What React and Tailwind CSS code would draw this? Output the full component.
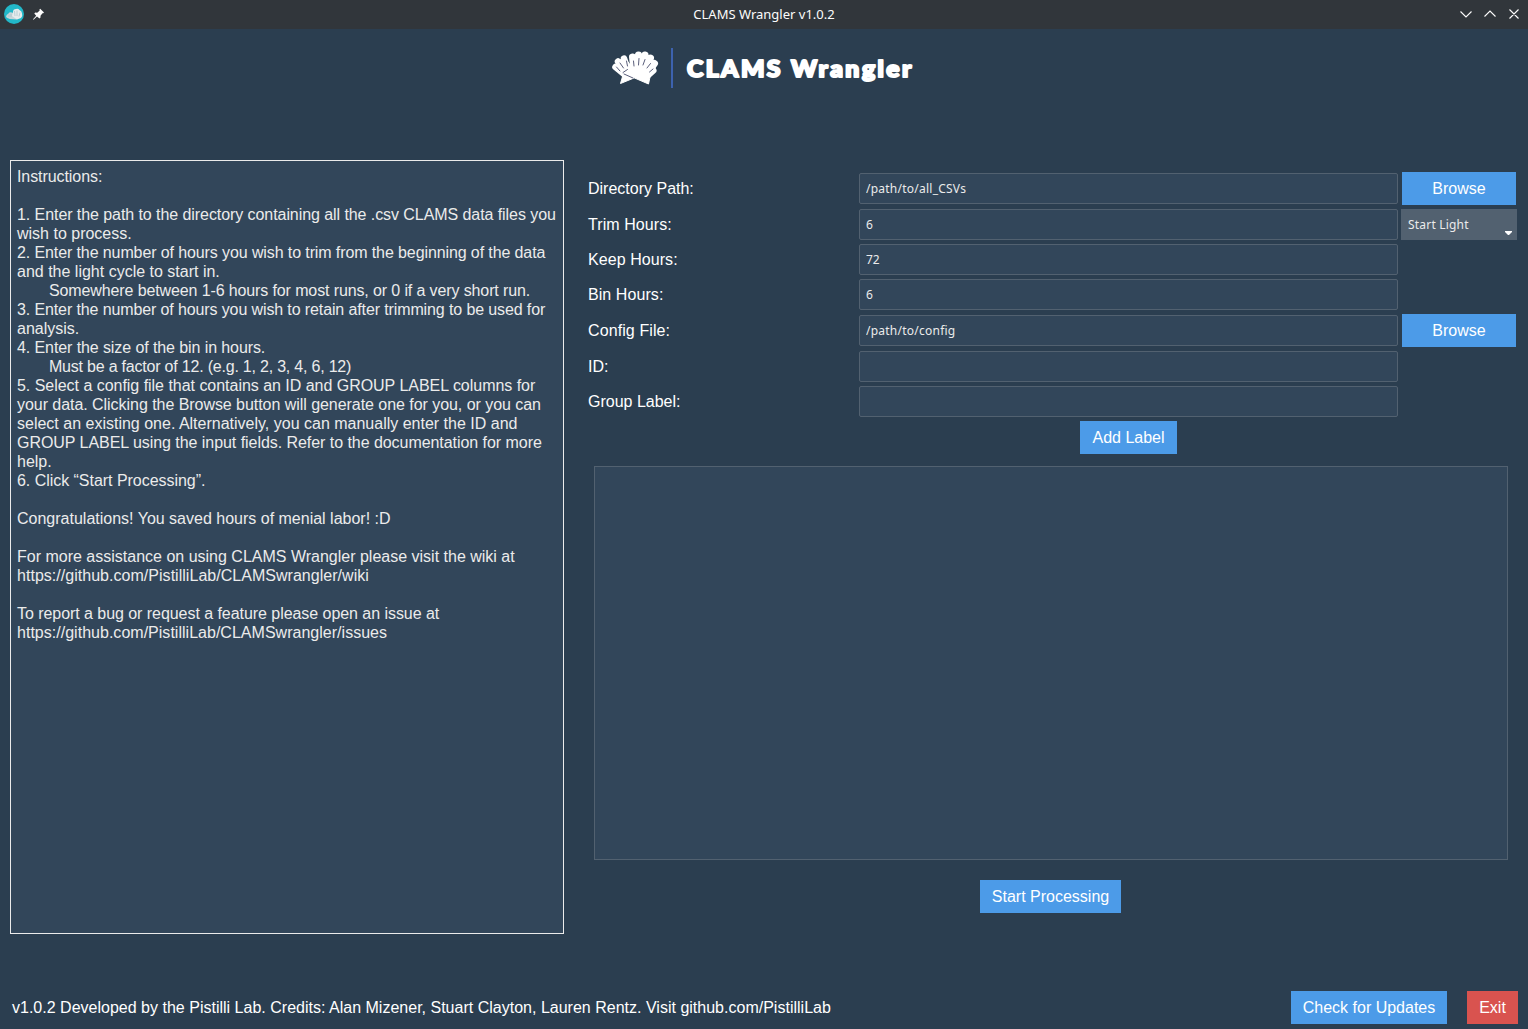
import React from "react";

// Each entry: text, and the total width adjustment in px spread over its letters.
const instructions = [
  ["Instructions:", -1],
  [""],
  ["1. Enter the path to the directory containing all the .csv CLAMS data files you", -5.5],
  ["wish to process.", 0],
  ["2. Enter the number of hours you wish to trim from the beginning of the data", -8],
  ["and the light cycle to start in.", 0],
  ["\tSomewhere between 1-6 hours for most runs, or 0 if a very short run.", -8],
  ["3. Enter the number of hours you wish to retain after trimming to be used for", -9],
  ["analysis.", 0],
  ["4. Enter the size of the bin in hours.", -3.5],
  ["\tMust be a factor of 12. (e.g. 1, 2, 3, 4, 6, 12)", -10],
  ["5. Select a config file that contains an ID and GROUP LABEL columns for", -2],
  ["your data. Clicking the Browse button will generate one for you, or you can", -3.5],
  ["select an existing one. Alternatively, you can manually enter the ID and", 0],
  ["GROUP LABEL using the input fields. Refer to the documentation for more", -3.5],
  ["help.", 0],
  ["6. Click “Start Processing”.", -1],
  [""],
  ["Congratulations! You saved hours of menial labor! :D", 0],
  [""],
  ["For more assistance on using CLAMS Wrangler please visit the wiki at", 0],
  ["https://github.com/PistilliLab/CLAMSwrangler/wiki", 1.5],
  [""],
  ["To report a bug or request a feature please open an issue at", -3],
  ["https://github.com/PistilliLab/CLAMSwrangler/issues", 1],
];

const fields = [
  { label: "Directory Path:", value: "/path/to/all_CSVs", action: "browse" },
  { label: "Trim Hours:", value: "6", action: "select", tracking: "tracking-[0.07px]" },
  { label: "Keep Hours:", value: "72", tracking: "tracking-[0.07px]" },
  { label: "Bin Hours:", value: "6", tracking: "tracking-[0.07px]" },
  { label: "Config File:", value: "/path/to/config", action: "browse", tracking: "tracking-[0.1px]" },
  { label: "ID:", value: "" },
  { label: "Group Label:", value: "" },
];

function Button({ children, className = "" }) {
  return (
    <button
      className={`flex h-[33px] shrink-0 items-center justify-center whitespace-nowrap text-[16px] text-white ${className}`}
    >
      {children}
    </button>
  );
}

function TitleBar() {
  return (
    <header className="grid h-[29px] shrink-0 grid-cols-[1fr_auto_1fr] items-center bg-[#31363b] text-[#fcfcfc]">
      <div className="flex items-center gap-2 pb-px pl-1">
        <svg width="20" height="20" viewBox="0 0 20 20">
          <circle cx="10" cy="10" r="10" fill="#22b8c9" />
          <path d="M2 13Q2 10.500 4.500 9.500Q5.500 7.500 8 8.500L10 10L13 15.500Q4 15.500 2 13Z" fill="#c5d6da" />
          <path d="M8 12L9 8Q9 5 12 5Q14 4 15.500 6Q18 7 18 9.500Q19 12 17 14L13 15.500Z" fill="#e6eced" />
          <path d="M5 13L5 10.500M7 13L7 10M11 12L10.500 7M13 12L13 6.500M15 12.500L16 8.500" stroke="#9dbcc4" strokeWidth=".6" />
        </svg>
        <svg width="13" height="13" viewBox="0 0 13 13" fill="#fcfcfc">
          <path d="M8.200 .800L12 4.500L11.200 5.300L10.500 5.200L8.500 7.700L8.500 9.500L7.500 10.500L5 8.500L1.500 11.800L1 11.300L4.200 7.800L2.300 5.500L3.200 4.500L5.200 4.700L7.700 2.500L7.400 1.600Z" />
        </svg>
      </div>
      <div className="font-['Noto_Sans',sans-serif] text-[13px]">CLAMS Wrangler v1.0.2</div>
      <svg className="mb-px justify-self-end" width="72" height="20" viewBox="0 0 72 20" fill="none" stroke="#fcfcfc" strokeWidth="1.1">
        <path d="M4.500 7.500L10 13L15.500 7.500M28.500 12.500L34 7L39.500 12.500M53.500 5.500L62.500 14.500M62.500 5.500L53.500 14.500" />
      </svg>
    </header>
  );
}

function Logo() {
  return (
    <svg className="ml-[610px] block" width="304" height="44" viewBox="610 46 304 44" role="img">
      <g fill="#fff" stroke="#fff" strokeLinecap="round" strokeLinejoin="round">
        <path d="M615 68L623 75L620.500 83.500L634 78L629 63L624 58L618 61Z" strokeWidth="1" />
        <path d="M615.500 67L624 74M618 61.500L625 71M624 58.500L628 70" strokeWidth="6.500" />
        <path d="M623 73L648.500 84L650 77L655 71L655 62L650 57L644 54L632 56L630 69Z" strokeWidth="1" />
        <path d="M632.500 57L634 71M638.500 55L639 71M645 55L643 71M650.500 58L646 71M654.500 63.500L647 74M653 70.500L648 75" strokeWidth="7" />
      </g>
      <path
        d="M616.500 67L620 71M620 63L623.500 68M626.500 61L627.500 66M633.500 61L634 66M639 58.500L638.500 65M645 59.500L643 65M650.500 63.500L647 68M653 69L649.500 72M623 72.500L627.500 69.500M624 74L633 78"
        fill="none"
        stroke="#5b5f7c"
        strokeWidth="1"
        strokeLinecap="round"
      />
      <rect x="671" y="48" width="2" height="40" fill="#3d62ae" />
      <g
        fill="#fff"
        stroke="#fff"
        strokeWidth="2"
        strokeLinejoin="round"
        fontFamily="Lato, sans-serif"
        fontWeight="900"
        fontSize="22.500"
      >
        <g transform="translate(687 77) scale(1.1 1)">
          <text textLength="85" lengthAdjust="spacing">CLAMS</text>
        </g>
        <g transform="translate(791 77) scale(1.1 1)">
          <text textLength="109.500" lengthAdjust="spacing">Wrangler</text>
        </g>
      </g>
    </svg>
  );
}

function Field({ label, value, action, tracking = "" }) {
  return (
    <div className={`flex items-center ${action === "browse" ? "h-[37px]" : "h-[35px]"}`}>
      <label className={`w-[271px] text-[16px] leading-[19px] text-white ${tracking}`}>{label}</label>
      <input
        aria-label={label}
        defaultValue={value}
        className={`h-[31px] w-[539px] rounded-[2px] border border-[#526170] bg-[#32465a] px-[6px] font-['Noto_Sans',sans-serif] text-[12px] text-[#ebebeb] outline-none ${
          action === "browse" ? "tracking-[0.24px]" : ""
        }`}
      />
      {action === "browse" && <Button className="ml-1 w-[114px] bg-[#4c9be8]">Browse</Button>}
      {action === "select" && (
        <button className="ml-[3px] flex h-[31px] w-[116px] items-center justify-between bg-[#526170] pl-[7px] pr-[5px] font-['Noto_Sans',sans-serif] text-[12px] tracking-[0.2px] text-[#ebebeb]">
          Start Light
          <svg className="mt-[17px]" width="7" height="4" viewBox="0 0 7 4" fill="#fff">
            <path d="M0 0H7V1L4 4H3L0 1Z" />
          </svg>
        </button>
      )}
    </div>
  );
}

export default function App() {
  return (
    <div className="flex h-[1029px] w-[1528px] flex-col overflow-hidden bg-[#2b3e50] font-['Liberation_Sans',sans-serif]">
      <TitleBar />
      <div className="h-[131px] shrink-0 pt-[17px]">
        <Logo />
      </div>
      <main className="flex h-[774px] shrink-0 pl-[10px]">
        <section className="w-[554px] shrink-0 border border-[#ebebeb] bg-[#32465a] px-[6px] pt-[6px] text-[16px] leading-[19px] text-[#ebebeb]">
          {instructions.map(([line, adjust = 0], i) => (
            <p
              key={i}
              className={`h-[19px] whitespace-nowrap ${line.startsWith("\t") ? "pl-8" : ""}`}
              style={adjust ? { letterSpacing: `${adjust / line.trim().length}px` } : undefined}
            >
              {line.trim()}
            </p>
          ))}
        </section>
        <section className="ml-6 flex w-[930px] flex-col pt-[10px]">
          {fields.map((f) => (
            <Field key={f.label} {...f} />
          ))}
          <div className="flex h-[37px] items-center pl-[492px]">
            <Button className="w-[97px] bg-[#4c9be8]">Add Label</Button>
          </div>
          <div className="ml-[6px] mt-[10px] h-[394px] w-[914px] shrink-0 border border-[#526170] bg-[#32465a]" />
          <Button className="ml-[392px] mt-5 w-[141px] bg-[#4c9be8]">Start Processing</Button>
        </section>
      </main>
      <footer className="mt-[57px] flex h-[33px] items-center pl-3 pr-[10px]">
        <p className="flex-1 text-[16px] tracking-[0.008px] text-white">
          v1.0.2 Developed by the Pistilli Lab. Credits: Alan Mizener, Stuart Clayton, Lauren Rentz. Visit github.com/PistilliLab
        </p>
        <Button className="w-[156px] bg-[#4c9be8]">Check for Updates</Button>
        <Button className="ml-5 w-[51px] bg-[#d9534f]">Exit</Button>
      </footer>
    </div>
  );
}
